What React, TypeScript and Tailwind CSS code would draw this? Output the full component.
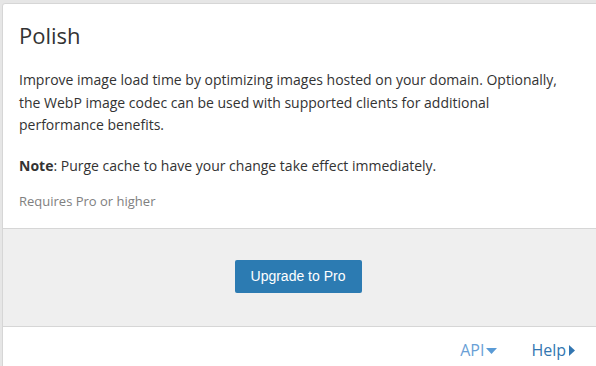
import React from "react";

export default function App() {
  return (
    <div className="w-[596px] h-[366px] bg-[#e6e6e6] pt-[3px] pl-[2px] overflow-hidden" style={{ fontFamily: '"Open Sans", sans-serif' }}>
      <div className="w-[600px] h-[370px] bg-white border border-[#d6d6d6] rounded-tl-[3px] flex flex-col">
        <div className="px-[16px] pt-[16px] h-[224px]">
          <h2 className="text-[22px] leading-[30px] text-[#333] font-normal">Polish</h2>
          <p className="mt-[19px] text-[14px] leading-[22.5px] text-[#333] w-[556px]">
            Improve image load time by optimizing images hosted on your domain. Optionally, the WebP image codec can be used with supported clients for additional performance benefits.
          </p>
          <p className="mt-[18px] text-[14px] leading-[22px] text-[#333]">
            <span className="font-bold">Note</span>: Purge cache to have your change take effect immediately.
          </p>
          <p className="mt-[14px] text-[13px] leading-[20px] text-[#808080]">Requires Pro or higher</p>
        </div>
        <div className="h-[99px] bg-[#efefef] border-t border-b border-[#d6d6d6] flex items-center justify-center pr-[6px]">
          <button className="w-[127px] h-[33px] bg-[#2c7bb2] rounded-[2px] text-white text-[14px] ml-[-2px] mt-[-2px]" style={{ fontFamily: '"Liberation Sans", Arial, sans-serif' }}>
            Upgrade to Pro
          </button>
        </div>
        <div className="h-[42px] flex items-center justify-end pr-[26px] text-[16px] pt-[3px]">
          <span className="text-[#6a9fd6] flex items-center">
            API
            <svg width="11" height="6" viewBox="0 0 11 6" className="ml-[2px] mt-[2px]"><path d="M0 0h11L5.5 6z" fill="#5a9bd6" /></svg>
          </span>
          <span className="text-[#3276b1] flex items-center ml-[34px]">
            Help
            <svg width="6" height="11" viewBox="0 0 6 11" className="ml-[3px] mt-[1px]"><path d="M0 0v11l6-5.5z" fill="#3276b1" /></svg>
          </span>
        </div>
      </div>
    </div>
  );
}
